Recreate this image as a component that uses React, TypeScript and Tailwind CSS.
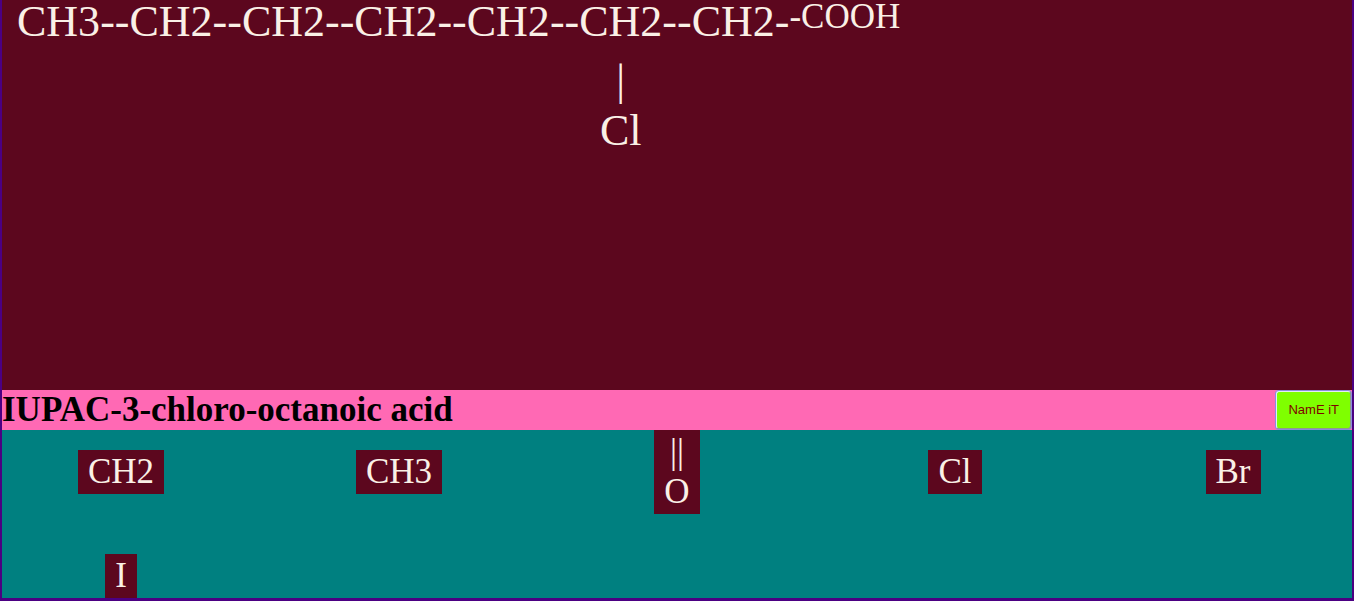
type Group = { label: string; bond: string; branch?: string };

const chain: Group[] = [
  { label: "CH3", bond: "--" },
  { label: "CH2", bond: "--" },
  { label: "CH2", bond: "--" },
  { label: "CH2", bond: "--" },
  { label: "CH2", bond: "--" },
  { label: "CH2", bond: "--", branch: "Cl" },
  { label: "CH2", bond: "-" },
];

const palette = ["CH2", "CH3", "O", "Cl", "Br", "I"];

function ChainGroup({ label, bond, branch }: Group) {
  return (
    <div className="flex items-start">
      <div className="flex flex-col items-center">
        <span>{label}</span>
        {branch && (
          <div className="mt-3 flex flex-col items-center leading-[50px]">
            <span>|</span>
            <span>{branch}</span>
          </div>
        )}
      </div>
      <span>{bond}</span>
    </div>
  );
}

function Tile({ label }: { label: string }) {
  const doubleBond = label === "O";
  return (
    <button
      type="button"
      className="flex cursor-pointer flex-col items-center bg-[#5c071e] px-[10px] py-[2px] text-[35px] leading-[40px]"
    >
      {doubleBond && <span>||</span>}
      <span>{label}</span>
    </button>
  );
}

export default function App() {
  return (
    <div className="flex min-h-screen flex-col border-x-2 border-b-[3px] border-[#4b0082] bg-[#008080] font-['Liberation_Serif',serif] text-[#faf0e6]">
      <main className="flex flex-1 items-start bg-[#5c071e] pl-[15px] text-[44px] leading-[44px]">
        {chain.map((group, index) => (
          <ChainGroup key={index} {...group} />
        ))}
        <span className="text-[35px] leading-[34px]">-COOH</span>
      </main>

      <section className="flex h-10 items-center justify-between bg-[#ff69b4]">
        <h1 className="text-[35px] leading-[40px] font-bold text-black">
          IUPAC-3-chloro-octanoic acid
        </h1>
        <button
          type="button"
          className="mr-px h-[38px] cursor-pointer rounded-[3px] border border-t-[#e4ecf4] border-r-[#8f9a8c] border-b-[#8f9a8c] border-l-[#e4ecf4] bg-[#7fff00] px-[11px] font-['Liberation_Sans',sans-serif] text-[13px] text-[#800000] ring-1 ring-[#8c8cdc]"
        >
          NamE iT
        </button>
      </section>

      <section className="grid grid-cols-5 place-items-center gap-10">
        {palette.map((label) => (
          <Tile key={label} label={label} />
        ))}
      </section>
    </div>
  );
}
